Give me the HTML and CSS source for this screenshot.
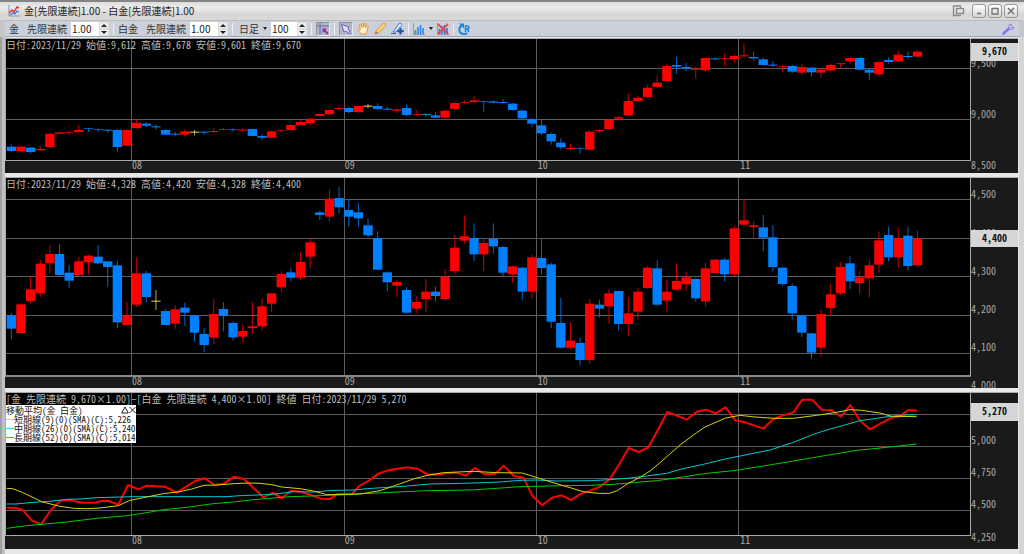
FILE: index.html
```html
<!DOCTYPE html>
<html lang="ja">
<head>
  <meta charset="UTF-8">
  <meta name="viewport" content="width=device-width, initial-scale=1.0">
  <title>金[先限連続]1.00 - 白金[先限連続]1.00</title>
  <link rel="stylesheet" href="styles.css">
</head>
<body>
  <header class="title-bar">
    <svg class="app-icon" width="12" height="12" viewBox="0 0 12 12" fill="none">
      <path d="M1 0v11h11" stroke="#999"/>
      <path d="M1 8l3-3 2 2 3-5 2 1" stroke="#e03040" stroke-width="1.4"/>
      <path d="M2 10l3-2 2 1 2-3 2 1" stroke="#3a78d0" stroke-width="1.2"/>
    </svg>
    <h1>金[先限連続]1.00 - 白金[先限連続]1.00</h1>
    <div class="window-buttons">
      <button type="button" class="popout-button" aria-label="切り離し">
        <svg width="14" height="12" viewBox="0 0 14 12" fill="none" stroke="#888" stroke-width="1.3">
          <path d="M4 10.500H1.500V1h7v2"/>
          <rect x="4.500" y="3.500" width="7" height="5"/>
          <path d="M3 10.500h6"/>
        </svg>
      </button>
      <button type="button" class="window-button" aria-label="最小化">
        <svg width="8" height="8" viewBox="0 0 8 8" stroke="#777" stroke-width="1.600"><path d="M2 6.500h4"/></svg>
      </button>
      <button type="button" class="window-button" aria-label="最大化">
        <svg width="8" height="8" viewBox="0 0 8 8" fill="none" stroke="#777"><path d="M1 1.500h6M1 1v6h6V1" stroke-width="1.400"/></svg>
      </button>
      <button type="button" class="window-button" aria-label="閉じる">
        <svg width="8" height="8" viewBox="0 0 8 8" stroke="#777" stroke-width="1.600"><path d="M1 1l6 6M7 1L1 7"/></svg>
      </button>
    </div>
  </header>

  <form class="toolbar">
    <label class="symbol" for="gold-ratio"><span>金</span><span>先限連続</span></label>
    <div class="spinner">
      <input id="gold-ratio" type="text" value="1.00">
      <div class="spinner-buttons">
        <button type="button" aria-label="増やす"></button>
        <button type="button" class="down" aria-label="減らす"></button>
      </div>
    </div>
    <span class="separator"></span>

    <label class="symbol" for="platinum-ratio"><span>白金</span><span>先限連続</span></label>
    <div class="spinner">
      <input id="platinum-ratio" type="text" value="1.00">
      <div class="spinner-buttons">
        <button type="button" aria-label="増やす"></button>
        <button type="button" class="down" aria-label="減らす"></button>
      </div>
    </div>
    <span class="separator"></span>

    <div class="period">
      <select id="period" aria-label="足種">
        <option>日足</option>
      </select>
      <span class="caret"></span>
    </div>
    <div class="spinner spinner-bars">
      <input id="bars" type="text" value="100" aria-label="表示本数">
      <div class="spinner-buttons">
        <button type="button" aria-label="増やす"></button>
        <button type="button" class="down" aria-label="減らす"></button>
      </div>
    </div>
    <span class="separator"></span>

    <button type="button" class="tool pressed" aria-label="クロスライン">
      <svg width="12" height="12" viewBox="0 0 12 12" fill="none">
        <path d="M0 3h12M3 0v12" stroke="#5a6cb8"/>
        <path d="M5.500 5.500h4.500L5.500 10z" fill="#8a2fb0"/>
        <path d="M7 7l4 4" stroke="#8a2fb0" stroke-width="1.800"/>
      </svg>
    </button>
    <span class="separator"></span>

    <button type="button" class="tool pressed" aria-label="選択">
      <svg width="12" height="12" viewBox="0 0 12 12">
        <path d="M1.500 1.500L9 4 8 5.500 10.500 10 9.500 10.500 5.500 8 4 9z" fill="#e4e0fa" stroke="#6b5cc0"/>
      </svg>
    </button>
    <button type="button" class="tool" aria-label="移動">
      <svg width="13" height="13" viewBox="0 0 13 13">
        <path d="M4 12L1 7.500C.5 6.500 1.500 6 2.300 6.800L3.300 7.800 2.500 3C2.500 2 3.600 2 3.900 3L4.800 5.500V1.800C4.900.8 6.200.8 6.300 1.800L6.700 5.300 7.500 2C7.800 1.200 8.900 1.300 8.900 2.300L8.700 5.800 10 3.800C10.500 3 11.500 3.500 11.200 4.500L10 9 9 12z" fill="#fff0d8" stroke="#e09838"/>
      </svg>
    </button>
    <button type="button" class="tool" aria-label="ライン">
      <svg width="13" height="13" viewBox="0 0 13 13">
        <path d="M1 12l1.500-4L9 1.500c1-1 3.500 1 2.500 2.500L5 10.500z" fill="#ffd078" stroke="#e09838"/>
        <path d="M1 12l1-2.500L3.800 11z" fill="#a86a20"/>
      </svg>
    </button>
    <button type="button" class="tool" aria-label="ライン編集">
      <svg width="13" height="13" viewBox="0 0 13 13">
        <path d="M2 10L8 1.500c1.500-.8 3 .4 2.500 2L5 10z" fill="#d8ecff" stroke="#3a80d8"/>
        <path d="M0 11.500h5" stroke="#3a60a8"/>
        <path d="M9.500 6v6.500M6.200 9.200h6.600" stroke="#2858a8" stroke-width="2.200"/>
      </svg>
    </button>
    <span class="separator"></span>

    <button type="button" class="tool tool-menu" aria-label="テクニカル">
      <svg width="12" height="12" viewBox="0 0 12 12" fill="none">
        <path d="M.5 0v11.500H12" stroke="#999"/>
        <path d="M2.500 11V7M5 11V4M7.500 11V2M10 11V5" stroke="#2888e8" stroke-width="1.600"/>
      </svg>
      <span class="caret"></span>
    </button>
    <button type="button" class="tool" aria-label="テクニカル解除">
      <svg width="12" height="12" viewBox="0 0 12 12" fill="none">
        <path d="M.5 0v11.500H12" stroke="#999"/>
        <path d="M2.500 11V6M5 11V3M7.500 11V2M10 11V5" stroke="#2878d8" stroke-width="1.600"/>
        <path d="M1 1l10 10M11 1L1 11" stroke="#e04858" stroke-width="1.800"/>
      </svg>
    </button>
    <span class="separator"></span>

    <button type="button" class="tool" aria-label="再読込">
      <svg width="12" height="12" viewBox="0 0 12 12" fill="none">
        <path d="M4 2.500C0 4.500.5 11 6 11c1.500 0 2.500-.5 3-1" stroke="#1888e0" stroke-width="2"/>
        <path d="M1 .5h5v5z" fill="#1888e0"/>
        <path d="M7.500 9V3h2c2 0 2 2.800 0 2.800h-2M9.300 6L11 9" stroke="#1888e0" stroke-width="1.600"/>
      </svg>
    </button>

    <button type="button" class="tool settings" aria-label="設定">
      <svg width="13" height="12" viewBox="0 0 13 12" fill="none">
        <path d="M1.500 10.500L7.500 5" stroke="#8478f0" stroke-width="2.600" stroke-linecap="round"/>
        <path d="M9.500 1C7 1 6 3 7 5s4 2 5-.5L9.500 4.500 9 3z" fill="#d8d4f8" stroke="#8478e0"/>
      </svg>
    </button>
  </form>

  <main class="charts">
    <section class="panel panel-gold">
      <div class="chart">
        <div class="plot">
          <svg id="gold-plot" viewBox="0 9 2892 363" preserveAspectRatio="none"></svg>
          <p class="caption">日付:2023/11/29 始値:9,612 高値:9,678 安値:9,601 終値:9,670</p>
        </div>
        <svg class="months"></svg>
      </div>
      <svg class="prices">
        <text y="28">9,500</text>
        <text y="79">9,000</text>
        <text y="130">8,500</text>
        <rect y="4" width="100%" height="18"/>
        <text class="last" x="50%" y="16">9,670</text>
      </svg>
    </section>

    <section class="panel panel-platinum">
      <div class="chart">
        <div class="plot">
          <svg id="platinum-plot" viewBox="0 12 2892 591" preserveAspectRatio="none"></svg>
          <p class="caption">日付:2023/11/29 始値:4,328 高値:4,420 安値:4,328 終値:4,400</p>
        </div>
        <svg class="months"></svg>
      </div>
      <svg class="prices">
        <text y="20">4,500</text>
        <text y="59">4,400</text>
        <text y="97">4,300</text>
        <text y="135">4,200</text>
        <text y="173">4,100</text>
        <text y="211">4,000</text>
        <rect y="52" width="100%" height="17"/>
        <text class="last" x="50%" y="64">4,400</text>
      </svg>
    </section>

    <section class="panel panel-spread">
      <div class="chart">
        <div class="plot">
          <svg id="spread-plot" viewBox="0 21 2892 426" preserveAspectRatio="none"></svg>
          <p class="caption">[金 先限連続 9,670×1.00]−[白金 先限連続 4,400×1.00] 終値 日付:2023/11/29 5,270</p>
          <div class="legend">
            <div class="legend-title">
              <span>移動平均(金 白金)</span>
              <button type="button" aria-label="折りたたむ">
                <svg width="8" height="8" viewBox="0 0 8 8" fill="none" stroke="#222"><path d="M4 1L.7 7h6.600z"/></svg>
              </button>
              <button type="button" aria-label="消す">
                <svg width="7" height="8" viewBox="0 0 7 8" stroke="#222"><path d="M.5 1l6 6M6.500 1l-6 6"/></svg>
              </button>
            </div>
            <ul>
              <li class="short">短期線(9)(0)(SMA)(C):5,226</li>
              <li class="middle">中期線(26)(0)(SMA)(C):5,240</li>
              <li class="long">長期線(52)(0)(SMA)(C):5,014</li>
            </ul>
          </div>
        </div>
        <svg class="months"></svg>
      </div>
      <svg class="prices">
        <text y="51">5,000</text>
        <text y="83">4,750</text>
        <text y="115">4,500</text>
        <text y="148">4,250</text>
        <rect y="10" width="100%" height="18"/>
        <text class="last" x="50%" y="22">5,270</text>
      </svg>
    </section>
  </main>

  <script src="script.js"></script>
</body>
</html>
```

FILE: styles.css
```css
* {
  margin: 0;
  padding: 0;
  box-sizing: border-box;
}

body {
  font-family: "Noto Sans CJK JP", sans-serif;
  font-size: 10px;
  line-height: 12px;
  color: #333;
  background-color: #c6c6c6;
  border-top: 2px solid #858585;
}

button {
  border: none;
  background: none;
  font: inherit;
}

svg {
  display: block;
}

/* Title bar */
.title-bar {
  height: 18px;
  display: flex;
  align-items: center;
  gap: 4px;
  padding: 0 6px 0 8px;
  background: linear-gradient(#dcdcdc, #ececec 30%, #d6d6d6 70%, #d9d9d9);
}

.title-bar h1 {
  flex: 1;
  font-size: 10px;
  font-weight: 400;
  color: #222;
}

.window-buttons {
  display: flex;
  align-items: center;
  gap: 2px;
}

.popout-button {
  margin-right: 4px;
}

.window-button {
  width: 14px;
  height: 14px;
  display: flex;
  align-items: center;
  justify-content: center;
  border: 1px solid #999;
  border-radius: 3px;
  background: linear-gradient(#fff, #d4d4d4);
}

/* Toolbar */
.toolbar {
  height: 17px;
  margin: 0 5px;
  padding: 0 4px;
  display: flex;
  align-items: center;
  gap: 4px;
  background-color: #ccd0da;
  border-top: 1px solid #bbb;
  border-bottom: 1px solid #9aa4b8;
}

.symbol {
  display: flex;
  gap: 8px;
}

.spinner {
  width: 38px;
  height: 14px;
  display: flex;
  background-color: #fff;
}

.spinner-bars {
  width: 36px;
}

.spinner input {
  flex: 1;
  min-width: 0;
  padding-left: 1px;
  border: none;
  font: inherit;
  color: #222;
  background: none;
}

.spinner-buttons {
  width: 10px;
  display: flex;
  flex-direction: column;
}

.spinner-buttons button {
  flex: 1;
  display: flex;
  align-items: center;
  justify-content: center;
  border: 1px solid #ddd;
  background-color: #eee;
}

.spinner-buttons button::before {
  content: "";
  border: 3px solid transparent;
  border-top: none;
  border-bottom: 3px solid #222;
}

.spinner-buttons .down::before {
  border-bottom: none;
  border-top: 3px solid #222;
}

.separator {
  width: 1px;
  height: 12px;
  background-color: #eceef2;
}

.period {
  display: flex;
  align-items: center;
  gap: 4px;
  padding-left: 2px;
}

.period select {
  appearance: none;
  width: 20px;
  border: none;
  background: none;
  font: inherit;
  color: inherit;
}

.caret {
  border: 2px solid transparent;
  border-top: 3px solid #222;
  border-bottom: none;
}

.tool {
  height: 14px;
  display: flex;
  align-items: center;
  gap: 4px;
}

.pressed {
  background-color: #b4b7c0;
  border: 1px solid #8e929c;
  border-right-color: #e4e6ea;
  border-bottom-color: #e4e6ea;
}

.settings {
  margin-left: auto;
}

/* Charts */
.charts {
  display: flex;
  flex-direction: column;
  gap: 5px;
  padding: 2px 6px 5px 5px;
  background: linear-gradient(90deg, #a0a0a0 2px, #c0c0c0 2px, #c0c0c0 5px, #e8e8e8 5px, #e8e8e8 calc(100% - 5px), #d4d4da calc(100% - 5px));
}

.panel {
  display: flex;
  background-color: #1a1a1a;
  box-shadow: 0 -1px #aaa;
}

.chart {
  flex: 1;
  min-width: 0;
}

.plot {
  position: relative;
  background-color: #000;
  border: 1px solid #a8a8a8;
  border-top: none;
}

.plot > svg {
  width: 100%;
}

.panel-platinum .plot {
  border-bottom: 2px solid #888;
}

.months {
  width: 100%;
}

.prices {
  width: 47px;
}

.panel-gold .plot > svg {
  height: 121px;
}

.panel-gold .months {
  height: 12px;
}

.panel-gold .prices {
  height: 134px;
}

.panel-platinum .plot > svg {
  height: 197px;
}

.panel-platinum .months {
  height: 11px;
}

.panel-platinum .prices {
  height: 210px;
}

.panel-spread .plot > svg {
  height: 142px;
}

.panel-spread .months {
  height: 13px;
}

.panel-spread .prices {
  height: 156px;
}

.caption {
  position: absolute;
  top: 0;
  left: 0;
  color: #bdbdbd;
  white-space: nowrap;
}

.caption,
.months,
.prices,
.legend {
  font-feature-settings: "hwid";
}

.months text,
.prices text {
  fill: #aaa;
}

.prices rect {
  fill: #d6d6d6;
}

.prices .last {
  fill: #111;
  font-weight: 700;
  text-anchor: middle;
}

/* Plot contents */
.grid {
  stroke: #5c5c5c;
  stroke-width: 1px;
  vector-effect: non-scaling-stroke;
  shape-rendering: crispEdges;
}

.up {
  fill: #f00;
}

.down-candle {
  fill: #0080ff;
}

.flat {
  fill: #e0d860;
}

.wick {
  opacity: 0.8;
}

.line {
  fill: none;
  stroke-width: 1px;
  stroke-linejoin: round;
  vector-effect: non-scaling-stroke;
}

.line-spread {
  stroke: #f00;
  stroke-width: 2px;
}

.line-short {
  stroke: #d8d400;
}

.line-middle {
  stroke: #00c8cc;
}

.line-long {
  stroke: #00cc00;
}

/* Moving average legend */
.legend {
  position: absolute;
  top: 12px;
  left: 0;
  padding-bottom: 1px;
  font-size: 9px;
  line-height: 9px;
  color: #111;
  background-color: #fff;
  white-space: nowrap;
}

.legend-title {
  height: 10px;
  display: flex;
  align-items: center;
}

.legend-title span {
  flex: 1;
}

.legend ul {
  list-style: none;
}

.legend li {
  display: flex;
  align-items: center;
}

.legend li::before {
  content: "";
  width: 8px;
  height: 1px;
  background-color: #e0dc20;
}

.legend .middle::before {
  background-color: #20d8e0;
}

.legend .long::before {
  background-color: #20d820;
}
```

FILE: script.js
```js
const SVG_NS = 'http://www.w3.org/2000/svg';
const WIDTH = 2892;
const FIRST_X = 16;
const STEP = 28.92;

const months = [
  { label: '08', x: 377 },
  { label: '09', x: 1014 },
  { label: '10', x: 1592 },
  { label: '11', x: 2198 }
];

// direction, body top, body bottom, wick top, wick bottom
const gold = `
d 332 345 325 348|u 332 346 330 350|d 335 348 333 353|u 339 343 331 345|u 293 333 293 338
u 289 293 287 295|u 289 291 286 297|u 282 288 267 289|d 276 278 275 288|d 279 281 277 288
d 281 284 279 290|d 282 333 279 346|u 282 329 279 330|u 261 276 249 278|d 263 269 259 273
d 271 274 265 280|d 282 296 279 297|d 293 296 288 299|u 286 296 280 302|x 287 290 282 298
d 287 290 285 297|u 285 288 275 291|u 279 281 275 284|d 279 281 277 287|u 281 284 277 286
d 279 300 278 301|d 300 305 294 312|u 286 305 284 306|u 282 284 280 290|u 267 282 264 286
u 258 267 253 267|u 248 261 246 268|u 234 240 234 242|u 222 235 220 237|u 216 219 212 222
d 216 228 212 233|u 210 228 209 232|x 209 212 204 216|d 210 219 202 220|d 218 221 213 224
u 220 224 218 231|d 216 237 207 240|u 234 236 222 238|d 234 237 232 242|d 238 245 229 246
u 224 245 223 247|u 201 219 199 222|u 198 200 192 203|u 193 198 180 199|d 195 197 195 227
d 196 200 193 202|d 198 201 188 203|d 203 222 201 224|d 224 247 221 250|d 249 263 246 273
d 268 292 250 296|d 294 316 290 326|d 320 334 307 341|u 336 339 324 341|d 337 339 335 353
u 287 341 283 343|u 282 285 280 290|u 252 279 250 280|u 244 248 240 254|u 195 238 171 239
u 185 195 181 197|u 155 183 148 187|u 140 153 118 155|u 90 135 85 137|d 87 92 63 113
d 93 97 81 106|u 98 101 93 128|u 66 103 64 109|d 67 70 65 72|u 66 68 51 91
u 60 69 56 80|u 58 61 22 64|d 63 67 46 74|d 70 87 64 89|d 86 89 75 92
u 91 93 87 108|d 90 107 87 112|u 93 110 85 117|d 95 109 92 123|u 101 110 96 125
u 87 103 82 105|u 82 84 81 96|u 66 76 64 83|d 66 101 63 103|d 101 110 97 132
u 78 115 76 122|d 72 78 64 83|u 56 76 44 78|d 60 63 48 69|u 47 62 44 66`;

const platinum = `
d 424 464 417 496|u 391 477 388 479|u 346 381 309 388|u 269 358 257 369|u 240 268 213 299
d 240 303 210 305|d 296 320 273 342|u 262 303 249 305|u 245 265 242 301|d 248 268 213 270
d 262 279 261 338|d 274 445 259 462|u 424 453 384 454|u 298 392 251 400|d 298 369 291 385
x 380 383 348 408|d 411 453 404 454|u 406 449 394 465|d 401 416 386 456|d 424 476 423 503
d 480 513 463 535|u 420 491 375 510|d 405 426 384 472|d 447 490 442 500|u 471 488 451 503
u 457 462 384 479|u 397 457 372 469|u 358 389 357 414|u 300 340 292 354|d 295 311 281 323
u 264 311 235 318|u 205 248 193 282|d 115 123 110 138|u 74 128 47 143|d 72 100 38 119
d 108 128 78 158|d 115 133 86 158|d 154 184 134 189|d 192 287 172 288|d 295 325 292 352
u 324 335 318 369|d 348 416 339 419|u 384 404 366 417|u 353 375 314 414|d 353 366 338 383
u 308 375 285 380|u 221 291 182 299|u 187 200 124 209|d 192 241 148 261|u 207 241 194 291
d 195 217 148 239|d 219 296 216 307|u 277 301 275 326|d 281 353 280 378|u 250 353 242 375
d 252 282 193 302|d 271 443 266 462|d 447 521 372 523|u 500 521 446 526|d 507 558 491 575
u 389 558 375 570|d 392 404 377 431|u 358 397 346 450|d 351 450 350 470|u 418 450 370 487
u 353 413 341 437|u 281 342 276 344|d 283 392 259 395|u 353 380 317 412|u 321 347 268 350
u 310 331 292 350|d 315 373 311 383|u 283 382 266 398|u 257 297 255 299|d 257 301 251 323
u 163 301 156 308|u 139 152 74 158|u 154 159 142 192|d 160 191 123 232|d 190 279 153 291
d 281 330 279 334|d 336 418 328 436|d 424 476 423 489|d 478 536 476 556|u 420 521 405 548
u 361 402 329 427|u 279 358 264 363|d 268 322 246 345|u 310 327 290 359|u 274 313 256 369
u 199 272 172 296|d 183 250 158 263|u 193 250 160 282|d 185 276 158 290|u 193 274 170 275`;

const lines = {
  long: '2,427 62,419 107,415 182,408 272,397 362,389 422,380 472,371 542,364 622,353 682,348 742,341 802,336 852,332 912,330 992,327 1072,323 1152,319 1262,314 1392,312 1472,307 1542,302 1672,299 1752,298 1822,295 1892,289 1952,284 1990,279 2042,271 2102,262 2182,254 2272,240 2362,225 2462,208 2552,193 2642,184 2732,174',
  middle: '2,354 30,354 82,349 132,346 182,340 222,339 272,335 382,332 662,332 702,329 782,326 827,322 862,317 922,318 982,313 1047,312 1082,308 1192,301 1272,294 1372,292 1482,288 1542,283 1592,282 1652,285 1752,284 1812,281 1872,276 1922,270 1982,262 2022,250 2092,235 2162,218 2232,204 2292,192 2362,169 2422,145 2472,129 2502,121 2562,104 2612,97 2652,91 2702,87 2732,86',
  short: '2,307 20,308 49,319 107,347 157,360 204,367 242,368 282,366 337,359 372,343 422,333 472,323 522,317 557,309 594,298 632,297 682,293 727,291 762,292 797,296 827,303 882,308 922,315 962,326 1062,324 1122,314 1172,297 1222,279 1264,268 1312,260 1402,256 1472,260 1549,261 1612,281 1672,299 1732,317 1777,322 1810,322 1834,314 1867,292 1902,274 1932,255 1962,230 2022,177 2072,140 2097,123 2159,96 2202,88 2247,93 2307,97 2362,97 2432,88 2492,79 2532,71 2567,73 2622,81 2657,91 2732,92',
  spread: '2,365 25,365 49,371 77,403 105,415 137,369 164,344 192,342 227,350 265,350 287,345 307,345 337,356 366,297 397,310 422,299 477,302 512,320 567,285 597,277 625,297 654,293 684,272 714,279 772,334 800,321 828,336 855,314 887,318 945,338 972,339 994,324 1037,325 1060,300 1087,285 1117,263 1147,253 1202,244 1234,248 1264,265 1292,266 1322,262 1352,260 1379,269 1407,246 1434,264 1467,264 1493,239 1524,270 1552,275 1580,331 1609,358 1638,335 1667,328 1696,342 1725,323 1755,313 1782,302 1812,279 1840,234 1868,186 1898,198 1927,184 1957,130 1984,78 2042,101 2072,77 2100,71 2129,82 2159,64 2188,103 2217,109 2272,128 2302,99 2332,88 2362,79 2389,41 2418,41 2448,72 2477,73 2505,92 2533,57 2562,104 2592,130 2652,97 2682,90 2707,72 2734,74'
};

function add(parent, name, attributes) {
  const node = document.createElementNS(SVG_NS, name);
  for (const key in attributes) {
    node.setAttribute(key, attributes[key]);
  }
  parent.appendChild(node);
  return node;
}

function drawGrid(svg, rows) {
  rows.forEach(y => add(svg, 'line', { class: 'grid', x1: 0, x2: WIDTH, y1: y, y2: y }));
  months.forEach(month => add(svg, 'line', { class: 'grid', x1: month.x, x2: month.x, y1: 0, y2: 610 }));
}

function drawCandles(svg, data) {
  const classes = { u: 'up', d: 'down-candle', x: 'flat' };
  data.trim().split(/[|\n]/).forEach((item, i) => {
    const [direction, top, bottom, high, low] = item.split(' ');
    const x = FIRST_X + STEP * i;
    const name = classes[direction];
    add(svg, 'rect', { class: name + ' wick', x: x - 1.5, y: high, width: 3, height: low - high });
    add(svg, 'rect', { class: name, x: x - 14, y: top, width: 28, height: bottom - top });
  });
}

const goldPlot = document.getElementById('gold-plot');
drawGrid(goldPlot, [98, 251]);
drawCandles(goldPlot, gold);

const platinumPlot = document.getElementById('platinum-plot');
drawGrid(platinumPlot, [77, 193, 308, 424, 537]);
drawCandles(platinumPlot, platinum);

const spreadPlot = document.getElementById('spread-plot');
drawGrid(spreadPlot, [85, 181, 277, 373]);
['spread', 'long', 'middle', 'short'].forEach(name => {
  add(spreadPlot, 'polyline', { class: 'line line-' + name, points: lines[name] });
});

// Month labels under every plot
document.querySelectorAll('.months').forEach(svg => {
  months.forEach(month => {
    const text = add(svg, 'text', { x: month.x / WIDTH * 100 + '%', dx: 1, y: 8 });
    text.textContent = month.label;
  });
});
```
